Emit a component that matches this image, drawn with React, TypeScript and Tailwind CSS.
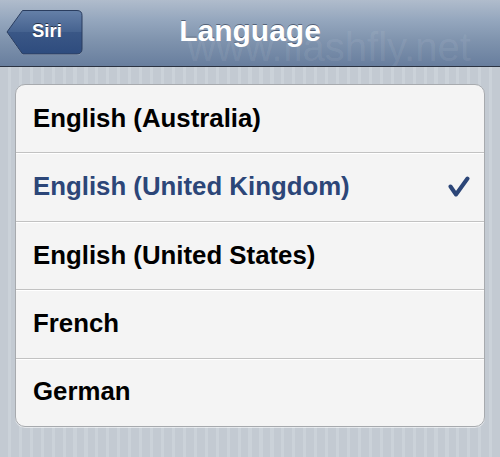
import React from "react";

const rows = [
  { label: "English (Australia)", selected: false },
  { label: "English (United Kingdom)", selected: true },
  { label: "English (United States)", selected: false },
  { label: "French", selected: false },
  { label: "German", selected: false },
];

function Check() {
  return (
    <svg width="22" height="22" viewBox="0 0 22 22" className="block">
      <path
        d="M2.5 10.5 L8 18.5 L19.5 2.5"
        fill="none"
        stroke="#2c4678"
        strokeWidth="4"
        strokeLinecap="round"
        strokeLinejoin="round"
      />
    </svg>
  );
}

function BackButton() {
  return (
    <div className="relative w-[80px] h-[48px] flex items-center">
      <svg width="80" height="48" viewBox="0 0 80 48" className="absolute inset-0">
        <defs>
          <linearGradient id="bb" x1="0" y1="0" x2="0" y2="1">
            <stop offset="0" stopColor="#6580a8" />
            <stop offset="0.5" stopColor="#45628f" />
            <stop offset="0.5" stopColor="#3a5786" />
            <stop offset="1" stopColor="#2e4c7e" />
          </linearGradient>
        </defs>
        <path
          d="M2 25 L17.5 3.5 L72 3.5 Q77 3.5 77 8.5 L77 42 Q77 47 72 47 L17.5 47 Z"
          fill="rgba(255,255,255,0.35)"
        />
        <path
          d="M2 24 L17.5 2.5 L72 2.5 Q77 2.5 77 7.5 L77 41 Q77 46 72 46 L17.5 46 Z"
          fill="url(#bb)"
          stroke="#2a3d5f"
          strokeWidth="1"
        />
      </svg>
      <span className="relative ml-[27px] mt-[-1px] text-white font-bold text-[18.5px] leading-none [text-shadow:0_-1px_0_rgba(0,0,0,0.55)]">
        Siri
      </span>
    </div>
  );
}

export default function App() {
  return (
    <div className="w-[500px] h-[457px] overflow-hidden flex flex-col font-['Liberation_Sans',Arial,sans-serif] bg-[repeating-linear-gradient(90deg,#c3cad2_0px,#c3cad2_7.8px,#cbd2d9_7.8px,#cbd2d9_10.94px)]">
      <header className="relative h-[67px] shrink-0 overflow-hidden border-b border-[#2b3342] bg-[linear-gradient(to_bottom,#b0bccc_0%,#95a7be_30%,#8094ae_60%,#687e9e_100%)] grid grid-cols-[1fr_auto_1fr] items-center">
        <div className="pl-[5px] self-start mt-[8px]">
          <BackButton />
        </div>
        <h1 className="text-white font-bold text-[30px] leading-none mt-[-4px] [text-shadow:0_-1px_0_rgba(30,40,60,0.55)]">
          Language
        </h1>
        <div />
        <span className="pointer-events-none absolute left-[187px] top-[27px] text-[40px] leading-[40px] text-white/[0.08] whitespace-nowrap">
          www.flashfly.net
        </span>
      </header>
      <main className="px-[15px] pt-[17px]">
        <div className="h-[343px] flex flex-col rounded-[10px] border border-[#a7aaae] bg-[#f4f4f4] overflow-hidden shadow-[0_1px_0_rgba(255,255,255,0.55)]">
          {rows.map((r, i) => (
            <div
              key={r.label}
              className={
                "flex-1 flex items-center justify-between pl-[17px] pr-[14px] " +
                (i > 0 ? "border-t border-[#c2c2c2] shadow-[inset_0_1px_0_#ffffff]" : "")
              }
            >
              <span
                className={
                  "font-bold text-[25.8px] leading-none " +
                  (r.selected ? "text-[#2c4678]" : "text-black")
                }
              >
                {r.label}
              </span>
              {r.selected && <Check />}
            </div>
          ))}
        </div>
      </main>
    </div>
  );
}
